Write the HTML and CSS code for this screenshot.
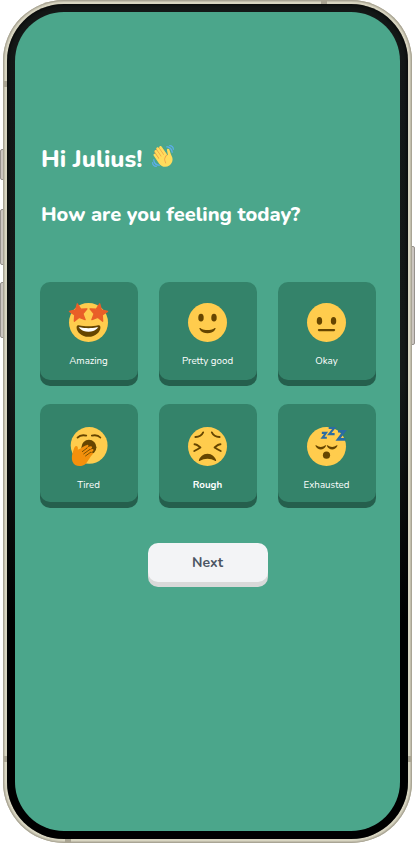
FILE: index.html
```html
<!DOCTYPE html>
<html lang="en">
<head>
<meta charset="utf-8">
<title>Mood check-in</title>
<link rel="stylesheet" href="styles.css">
</head>
<body>
<div class="device">
  <i class="key key-mute"></i><i class="key key-up"></i><i class="key key-down"></i><i class="key key-power"></i>
  <div class="frame">
    <i class="band band-lt"></i><i class="band band-lb"></i><i class="band band-rb"></i><i class="band band-t"></i><i class="band band-b"></i>
    <div class="bezel">
      <main class="screen">
        <h1 class="greeting"><span>Hi Julius!</span>
          <svg class="wave" viewBox="0 0 36 36"><path fill="#EF9645" d="M4.861 9.147c.94-.657 2.357-.531 3.201.166l-.968-1.407c-.779-1.111-.5-2.313.612-3.093 1.112-.777 4.263 1.312 4.263 1.312-.786-1.122-.639-2.544.483-3.331 1.122-.784 2.68-.513 3.465.611l10.292 14.569L25 31 11.083 25.042 4.25 12.625c-.793-1.129-.519-2.686.611-3.478z"/><path fill="#FFDC5D" d="M2.695 17.336s-1.132-1.65.519-2.781c1.649-1.131 2.78.518 2.78.518l5.251 7.658c.181-.302.379-.6.6-.894L4.557 11.21s-1.131-1.649.519-2.78c1.649-1.131 2.78.518 2.78.518l6.855 9.997c.255-.208.516-.417.785-.622L7.549 6.732s-1.131-1.649.519-2.78c1.649-1.131 2.78.518 2.78.518l7.947 11.589c.292-.179.581-.334.871-.498L12.238 4.729s-1.131-1.649.518-2.78c1.649-1.131 2.78.518 2.78.518l7.854 11.454 1.194 1.742c-4.948 3.394-5.419 9.779-2.592 13.902.565.825 1.39.26 1.39.26-3.393-4.949-2.357-10.51 2.592-13.903L24.515 8.62s-.545-1.924 1.378-2.47c1.924-.545 2.47 1.379 2.47 1.379l1.685 5.004c.668 1.984 1.379 3.961 2.32 5.831 2.657 5.28 1.07 11.842-3.94 15.279-5.465 3.747-12.936 2.354-16.684-3.11L2.695 17.336z"/><path fill="#5DADEC" d="M12 32.042C8 32.042 3.958 28 3.958 24c0-.553-.405-1-.958-1s-1.042.447-1.042 1C1.958 30 6 34.042 12 34.042c.553 0 1-.489 1-1.042s-.447-.958-1-.958zM7 34c-3 0-5-2-5-5 0-.553-.447-1-1-1s-1 .447-1 1c0 4 3 7 7 7 .553 0 1-.447 1-1s-.447-1-1-1zM24 2c-.552 0-1 .448-1 1s.448 1 1 1c4 0 8 3.589 8 8 0 .552.448 1 1 1s1-.448 1-1c0-5.514-4-10-10-10zM29 .042c-.552 0-1 .406-1 .958s.448 1.042 1 1.042c3 0 4.958 2.225 4.958 4.958 0 .552.489 1 1.042 1s.958-.448.958-1C35.958 3.163 33 .042 29 .042z"/></svg>
        </h1>
        <h2 class="question">How are you feeling today?</h2>
        <div class="moods">
          <button class="mood">
            <svg class="face" viewBox="0 0 36 36"><circle class="skin" cx="18" cy="18" r="18"/><path class="dark" d="M18 21.500c-3.600 0-6-.4-9-1-.7-.1-2 0-2 2 0 4 4.600 8.700 11 8.700s11-4.700 11-8.700c0-2-1.300-2.100-2-2-3 .6-5.400 1-9 1z"/><path fill="#fff" d="M9 22.200s3 1 9 1 9-1 9-1-2 4.300-9 4.300-9-4.300-9-4.300z"/><g class="star"><path id="star" d="M7.700.7 10.800 5.700 16.600 5.400 12.800 9.900 14.900 15.400 9.500 13.200 4.900 16.800 5.300 11 .4 7.700 6.100 6.300z"/><use href="#star" transform="matrix(-1 0 0 1 36 0)"/></g></svg>
            <span class="label">Amazing</span>
          </button>
          <button class="mood">
            <svg class="face" viewBox="0 0 36 36"><circle class="skin" cx="18" cy="18" r="18"/><g class="dark"><ellipse cx="12" cy="13.500" rx="2.500" ry="3.500"/><ellipse cx="24" cy="13.500" rx="2.500" ry="3.500"/><path d="M10.515 23.621C10.560 23.800 11.683 28 18 28c6.318 0 7.440-4.200 7.485-4.379.055-.217-.043-.442-.237-.554-.195-.111-.439-.078-.6.077C24.629 23.163 22.694 25 18 25s-6.630-1.837-6.648-1.855C11.256 23.050 11.128 23 11 23c-.084 0-.169.021-.246.064-.196.112-.294.339-.239.557z"/></g></svg>
            <span class="label">Pretty good</span>
          </button>
          <button class="mood">
            <svg class="face" viewBox="0 0 36 36"><circle class="skin" cx="18" cy="18" r="18"/><g class="dark"><ellipse cx="11.500" cy="16.500" rx="2.500" ry="3.500"/><ellipse cx="24.500" cy="16.500" rx="2.500" ry="3.500"/><rect x="10" y="24" width="16" height="2" rx="1"/></g></svg>
            <span class="label">Okay</span>
          </button>
          <button class="mood low">
            <svg class="face" viewBox="-.6 0 36 36"><circle class="skin" cx="18" cy="17" r="17"/><path class="line" d="M7.300 9.700Q10 6.800 15.300 7.900M20.500 7.900Q25.800 6.800 28.300 9.700"/><circle class="dark" cx="17.800" cy="18.700" r="6.900"/><path fill="#F4900C" d="M4.300 19.200c1.200-2.500 3.200-1.700 3.300.2l-.1 1.700c3.500-2 6-4 8.600-4.600 1.500-.2 1.700 1.200.6 1.900l-2.200 1.500c2-1.200 3.700-1.800 4.800-2.100 1.700-.2 1.900 1.400.7 2.100l-2.300 1.700 2.900-1.300c1.500-.4 2 1.100.8 2l-2.700 1.900 1.900-.6c1.200-.1 1.400 1 .4 1.800-2.400 2-3.300 5.600-5.900 8.200-4 3.800-10.800 3.200-12.500-1.800-1.300-4.400.1-8.200 1.700-12.600z"/><path class="crease" d="M11.700 22.700 16 19.500M13 24.800 18.500 20.800M14.700 26.700 19.500 23.200"/></svg>
            <span class="label">Tired</span>
          </button>
          <button class="mood low">
            <svg class="face" viewBox="0 0 36 36"><circle class="skin" cx="18" cy="18" r="18"/><path class="line" d="M6.800 9.200Q12 9.300 14 5M29.200 9.200Q24 9.300 22 5"/><path class="line" d="M6 15.900Q8 15.900 11.500 18.900 9 20.600 5.800 22.200M30 15.900Q28 15.900 24.500 18.900 27 20.600 30.200 22.200"/><path class="dark" d="M18 24.700c4.200 0 6.800 3 7.900 5.700.3.800-.3 1.100-1 .7-2-1.200-4.400-1.900-6.900-1.900s-4.900.7-6.900 1.900c-.7.400-1.300.1-1-.7 1.100-2.700 3.700-5.700 7.900-5.700z"/></svg>
            <span class="label label-active">Rough</span>
          </button>
          <button class="mood low">
            <svg class="face" viewBox="0 0 36 36"><circle class="skin" cx="18" cy="18" r="18"/><g class="dark"><path d="M8.400 16.900Q12.700 20.200 17 16.900c.5-.3.800.2.500.7Q15.900 20.800 12.700 20.800T7.900 17.600c-.3-.5 0-1 .5-.7zM18.900 16.900Q23.200 20.200 27.500 16.900c.5-.3.800.2.500.7Q26.400 20.800 23.200 20.800T18.400 17.600c-.3-.5 0-1 .5-.7z"/><circle cx="18" cy="26" r="3.300"/></g><path class="zed" d="M13.700 5.400H17.600L14.300 10H18.300M20 .9H25.200L20.500 6.600H25.500"/><path class="zed zed-big" d="M28.600 3.900H34.400L28.700 11.400H35.300"/></svg>
            <span class="label">Exhausted</span>
          </button>
        </div>
        <button class="next">Next</button>
      </main>
    </div>
  </div>
</div>
</body>
</html>
```
FILE: styles.css
```css
* { box-sizing: border-box; }
body { margin: 0; background: #fff; font-family: Nunito, Lato, sans-serif; overflow: hidden; }
button { border: 0; padding: 0; font: inherit; color: inherit; }

.device { position: relative; width: 415px; height: 843px; padding: 0 3px; }
.frame {
  position: relative; height: 843px; padding: 4px; border-radius: 61px;
  background: #d8d5c1; overflow: hidden;
  box-shadow: inset 0 0 0 1px #a9a595, inset 0 0 0 2px #c2beac;
}
.bezel {
  position: relative; height: 835px; padding: 8px; border-radius: 57px;
  background: linear-gradient(#141817, #151918 45%, #000 75%);
  box-shadow: inset 0 0 5px #000;
}
.screen {
  width: 385px; height: 819px; padding: 132px 24px 0 25px; border-radius: 49px;
  background: #4ba68b; color: #fff;
  display: flex; flex-direction: column; align-items: flex-start;
}

.key { position: absolute; left: 0; width: 4px; background: #cbc5c0; border: 1px solid #96918d; border-radius: 2px 0 0 2px; }
.key-mute { top: 149px; height: 31px; }
.key-up { top: 209px; height: 56px; }
.key-down { top: 282px; height: 56px; }
.key-power { top: 246px; left: 411px; height: 99px; border-radius: 0 2px 2px 0; }
.band { position: absolute; background: #a9a492; width: 4px; height: 6px; }
.band-lt { left: 0; top: 81px; }
.band-lb { left: 0; top: 756px; }
.band-rb { right: 0; top: 756px; }
.band-t { left: 318px; top: 0; width: 6px; height: 4px; }
.band-b { left: 62px; bottom: 0; width: 6px; height: 4px; }

.greeting { margin: 0 0 0 1px; height: 30px; display: flex; font-size: 24px; line-height: 30px; font-weight: 800; }
.greeting span { width: 102px; white-space: nowrap; }
.wave { width: 22px; height: 22px; margin: 1px 0 0 9px; }
.question { margin: 28px 0 0 1px; font-size: 20px; line-height: 26px; font-weight: 800; white-space: nowrap; }

.moods { margin-top: 54px; display: grid; grid-template-columns: repeat(3, 98px); gap: 24px 21px; }
.mood {
  height: 98px; padding: 21px 1px 0 0; border-radius: 10px;
  background: #34836a; box-shadow: 0 6px #255f4d;
  display: flex; flex-direction: column; align-items: center;
}
.low { padding-top: 23px; }
.face { width: 39px; height: 39px; display: block; overflow: visible; }
.label { margin-top: 11px; font-size: 9.75px; line-height: 16px; white-space: nowrap; }
.label-active { font-weight: 700; }

.skin { fill: #ffcc4d; }
.dark { fill: #664500; }
.line { fill: none; stroke: #664500; stroke-width: 1.7; stroke-linecap: round; stroke-linejoin: round; }
.star { fill: #e95f28; stroke: #e95f28; stroke-width: 1.2; stroke-linejoin: round; }
.crease { fill: none; stroke: #664500; stroke-width: .8; stroke-linecap: round; }
.zed { fill: none; stroke: #2b6ca3; stroke-width: 1.9; stroke-linejoin: miter; }
.zed-big { stroke-width: 2.4; }

.next {
  width: 120px; height: 39px; margin: 41px 0 0 108px; padding-right: 1px; border-radius: 10px;
  background: #f3f4f6; color: #4b5563; box-shadow: 0 5px #d9d9d9;
  font-size: 14px; line-height: 39px; font-weight: 700;
}
```
